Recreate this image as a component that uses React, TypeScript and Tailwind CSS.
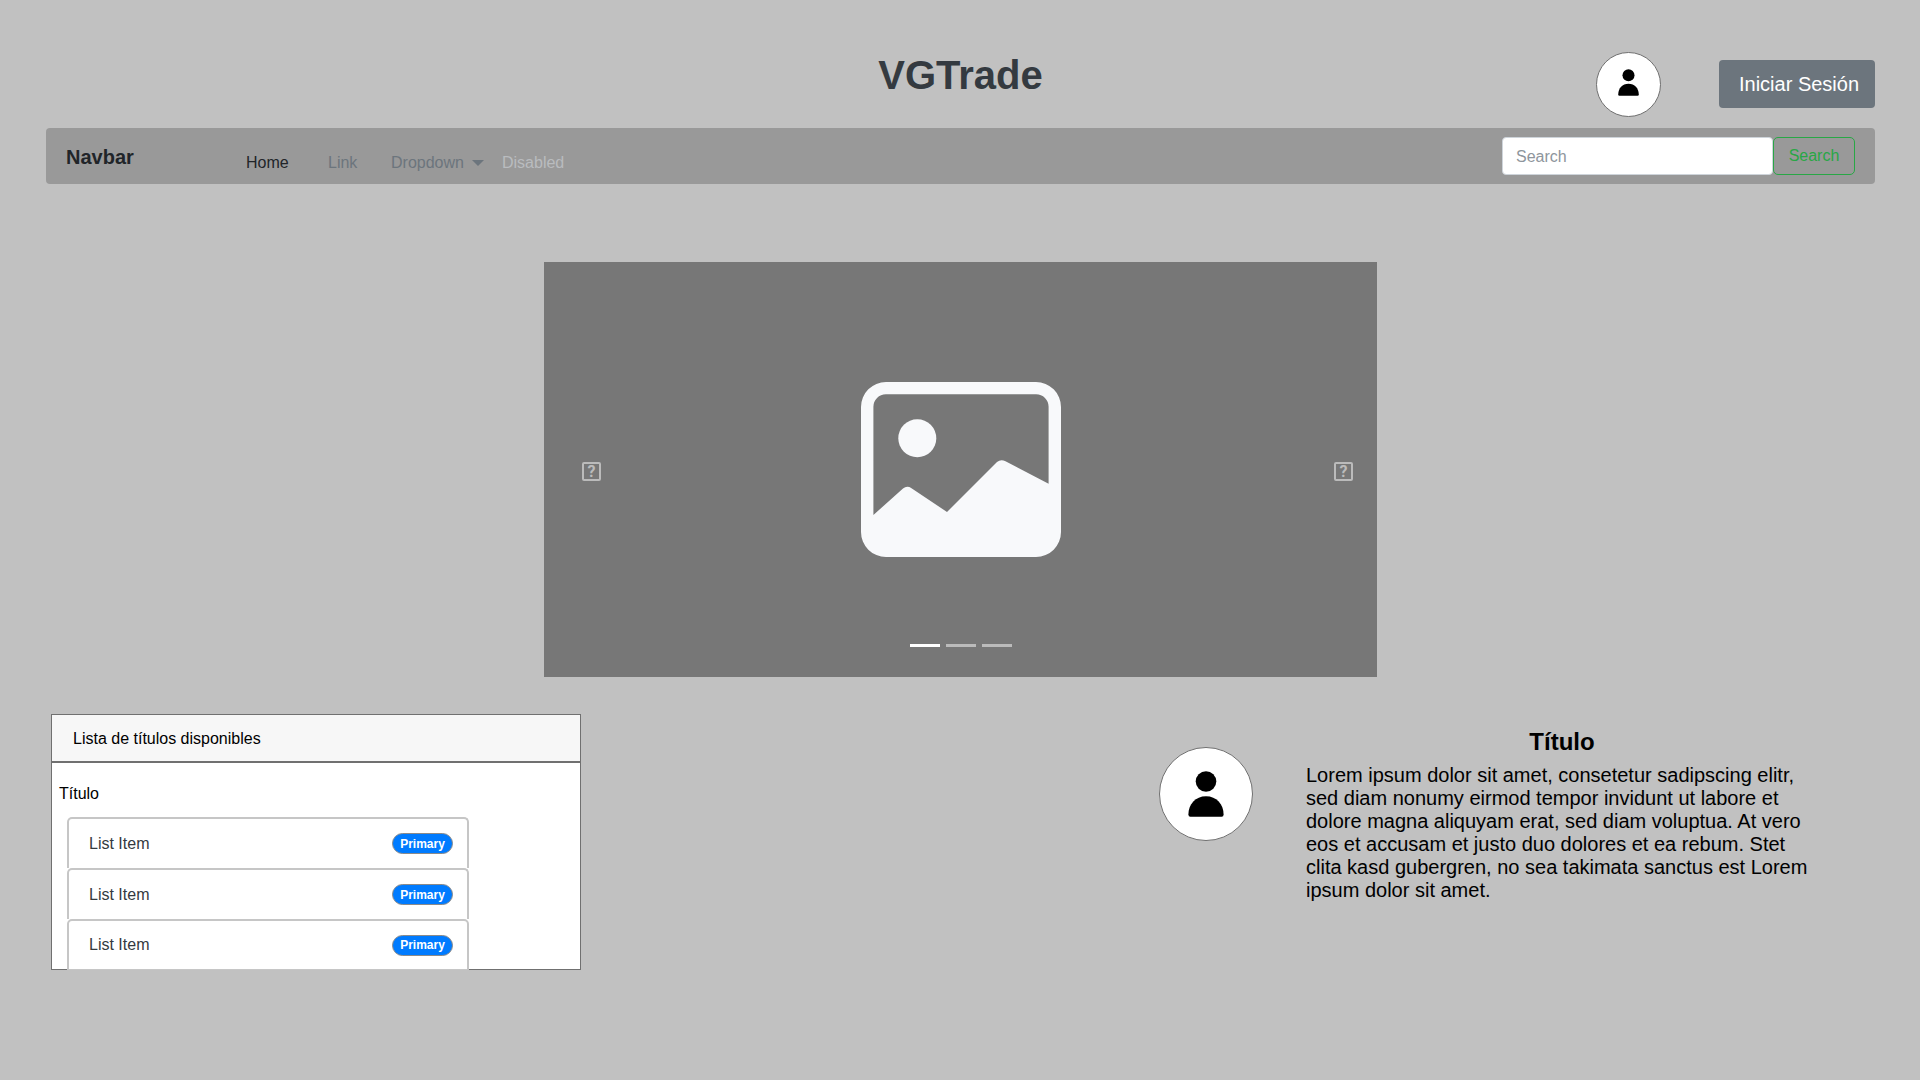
const navLinks = [
  { label: "Home", style: "w-[82px] text-[#212529]" },
  { label: "Link", style: "w-[63px] text-[#6c757d]" },
];

const listItems = ["List Item", "List Item", "List Item"];

function PersonIcon({ className }: { className: string }) {
  return (
    <svg viewBox="0 0 36 46" className={className} fill="currentColor" aria-hidden="true">
      <circle cx="18" cy="10.5" r="10.3" />
      <path d="M0.4 43.6C0.4 33 7.6 25.2 18 25.2S35.6 33 35.6 43.6Q35.6 45.8 33.6 45.8H2.4Q0.4 45.8 0.4 43.6Z" />
    </svg>
  );
}

function ImageIcon() {
  return (
    <svg viewBox="0 0 200 175" className="h-[175px] w-[200px] text-[#f8f9fb]" fill="currentColor" aria-hidden="true">
      <path
        fillRule="evenodd"
        d="M25 0H175A25 25 0 0 1 200 25V150A25 25 0 0 1 175 175H25A25 25 0 0 1 0 150V25A25 25 0 0 1 25 0ZM25 12.3A12.5 12.5 0 0 0 12.4 25V133L42 106.5Q46 103.200 50.500 106.200L86 130L136 80Q139.800 76.800 144.500 79.300L187.600 101.700V25A12.500 12.500 0 0 0 175 12.300Z"
      />
      <circle cx="56.3" cy="56.3" r="19" />
    </svg>
  );
}

function UnknownIcon() {
  return (
    <span className="flex size-[19px] items-center justify-center rounded-xs border-2 border-[#bbb] font-[Roboto,sans-serif] text-base leading-4 font-bold text-[#bbb]">
      ?
    </span>
  );
}

function Avatar({ className, icon }: { className: string; icon: string }) {
  return (
    <div className={`flex shrink-0 items-center justify-center rounded-full border border-[#707070] bg-white text-black ${className}`}>
      <PersonIcon className={icon} />
    </div>
  );
}

export default function App() {
  return (
    <div className="min-h-screen bg-[#c1c1c1] pt-[52px] pr-[45px] pb-10 pl-[46px] font-['Liberation_Sans',Arial,sans-serif] text-base leading-6 text-black">
      <header className="grid grid-cols-[1fr_auto_1fr] items-start">
        <h1 className="col-start-2 text-[40px] leading-[46px] font-bold text-[#343a40]">VGTrade</h1>
        <div className="flex items-start justify-end gap-[58px]">
          <Avatar className="size-[65px]" icon="mb-1 h-[27px] w-[21px]" />
          <button type="button" className="mt-2 h-12 w-[156px] rounded-sm bg-[#6c757d] pl-1 text-xl text-white">
            Iniciar Sesión
          </button>
        </div>
      </header>

      <nav className="mt-[11px] flex items-start rounded-sm bg-[#999] px-5 py-[9px]">
        <a href="#" className="mt-2 w-[180px] shrink-0 text-xl leading-6 font-bold text-[#212529]">
          Navbar
        </a>
        <ul className="mt-[14px] flex">
          {navLinks.map((link) => (
            <li key={link.label} className={link.style}>
              <a href="#">{link.label}</a>
            </li>
          ))}
          <li className="w-[111px] text-[#6c757d]">
            <button type="button" className="flex items-center gap-2">
              Dropdown
              <svg viewBox="0 0 12 6" className="h-[6px] w-3" fill="currentColor" aria-hidden="true">
                <path d="M0 0H12L6 6Z" />
              </svg>
            </button>
          </li>
          <li className="text-[#b9bcbf]">Disabled</li>
        </ul>
        <form className="ml-auto flex">
          <input
            type="search"
            aria-label="Search"
            placeholder="Search"
            className="h-[38px] w-[271px] rounded-sm border border-[#ced4da] bg-white px-[13px] pt-[2px] placeholder:text-[#8e959c]"
          />
          <button type="button" className="h-[38px] w-[82px] rounded-[5px] border border-[#28a745] text-[#28a745]">
            Search
          </button>
        </form>
      </nav>

      <section
        className="relative mx-auto mt-[78px] grid h-[415px] max-w-[833px] grid-cols-[1fr_auto_1fr] items-center bg-[#777] pr-6 pl-[25px]"
        aria-label="Carousel"
      >
        <button type="button" aria-label="Previous" className="justify-self-start pt-1 pl-[13px]">
          <UnknownIcon />
        </button>
        <ImageIcon />
        <button type="button" aria-label="Next" className="justify-self-end pt-1">
          <UnknownIcon />
        </button>
        <div className="absolute inset-x-0 bottom-[30px] flex justify-center gap-[6px]">
          <span className="h-[3px] w-[30px] bg-white" />
          <span className="h-[3px] w-[30px] bg-[#bbb]" />
          <span className="h-[3px] w-[30px] bg-[#bbb]" />
        </div>
      </section>

      <main className="mt-[37px] flex items-start justify-between pr-[57px] pl-[5px]">
        <section className="w-[530px] border border-[#707070] bg-white">
          <h2 className="border-b-2 border-[#707070] bg-[#f7f7f7] pt-3 pb-[10px] pl-[21px]">Lista de títulos disponibles</h2>
          <h3 className="mt-[19px] pl-[7px]">Título</h3>
          <ul className="mt-[11px] -mb-px ml-[15px] w-[402px]">
            {listItems.map((item, i) => (
              <li
                key={i}
                className="flex h-[51px] items-center justify-between rounded-t-[5px] border-x-2 border-t-2 border-[#c6c6c6] bg-white pr-[14px] pl-5 text-[#343a40] last:border-b"
              >
                {item}
                <span className="flex h-[21px] w-[61px] items-center justify-center rounded-full border border-[#8a8a8a] bg-[#007bff] text-xs leading-4 font-bold text-white">
                  Primary
                </span>
              </li>
            ))}
          </ul>
        </section>

        <section className="flex items-start gap-[53px] pt-[14px]">
          <Avatar className="mt-[19px] size-[94px]" icon="h-[46px] w-[36px]" />
          <div className="w-[512px]">
            <h2 className="text-center text-2xl leading-7 font-bold">Título</h2>
            <p className="mt-2 text-xl leading-[23px]">
              Lorem ipsum dolor sit amet, consetetur sadipscing elitr, sed diam nonumy eirmod tempor invidunt ut labore et
              dolore magna aliquyam erat, sed diam voluptua. At vero eos et accusam et justo duo dolores et ea rebum. Stet
              clita kasd gubergren, no sea takimata sanctus est Lorem ipsum dolor sit amet.
            </p>
          </div>
        </section>
      </main>
    </div>
  );
}
